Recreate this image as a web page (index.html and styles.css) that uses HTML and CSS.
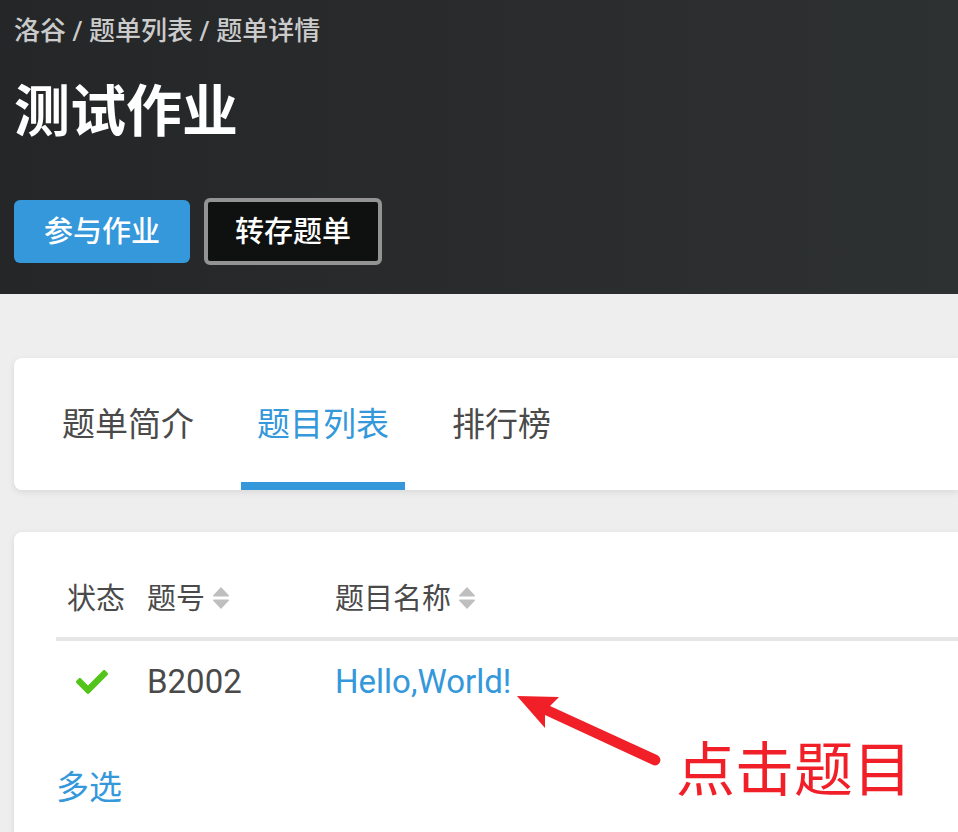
FILE: index.html
```html
<!DOCTYPE html>
<html lang="zh-CN">
<head>
<meta charset="utf-8">
<meta name="viewport" content="width=device-width, initial-scale=1">
<title>测试作业</title>
<link rel="stylesheet" href="styles.css">
</head>
<body>
<header class="hero">
  <nav class="crumbs"><a href="#">洛谷</a> / <a href="#">题单列表</a> / <a href="#">题单详情</a></nav>
  <h1 class="title">测试作业</h1>
  <div class="actions">
    <button class="btn btn-primary" type="button">参与作业</button>
    <button class="btn btn-outline" type="button">转存题单</button>
  </div>
</header>
<main class="content">
  <nav class="card tabs">
    <a class="tab" href="#">题单简介</a>
    <a class="tab tab-active" href="#">题目列表</a>
    <a class="tab" href="#">排行榜</a>
  </nav>
  <section class="card problems">
    <table class="table">
      <colgroup><col class="col-status"><col class="col-id"><col></colgroup>
      <thead>
        <tr>
          <th class="status-head">状态</th>
          <th>题号<svg class="sort" viewBox="0 0 16 22"><path d="M8 0 16 8.500q0 1-1 1H1q-1 0-1-1ZM8 22 16 13.500q0-1-1-1H1q-1 0-1 1Z"/></svg></th>
          <th>题目名称<svg class="sort" viewBox="0 0 16 22"><path d="M8 0 16 8.500q0 1-1 1H1q-1 0-1-1ZM8 22 16 13.500q0-1-1-1H1q-1 0-1 1Z"/></svg></th>
        </tr>
      </thead>
      <tbody>
        <tr>
          <td class="status-cell"><svg class="check" viewBox="0 0 512 512"><path d="M173.898 439.404l-166.400-166.400c-9.997-9.997-9.997-26.206 0-36.204l36.203-36.204c9.997-9.998 26.207-9.998 36.204 0L192 312.690 432.095 72.596c9.997-9.997 26.207-9.997 36.204 0l36.203 36.204c9.997 9.997 9.997 26.206 0 36.204l-294.400 294.401c-9.998 9.997-26.207 9.997-36.204-.001z"/></svg></td>
          <td>B2002</td>
          <td>
            <span class="target"><a class="link" href="#">Hello,World!</a>
              <span class="note">
                <svg class="arrow" viewBox="0 0 146 70"><path d="M1 0 43 1 34 10 141 59a5 5 0 0 1-4 10L29 19V32Z"/></svg>
                <span class="note-text">点击题目</span>
              </span>
            </span>
          </td>
        </tr>
      </tbody>
    </table>
    <button class="multi" type="button">多选</button>
  </section>
</main>
</body>
</html>
```

FILE: styles.css
```css
* {
  box-sizing: border-box;
}

body {
  margin: 0;
  overflow-x: hidden;
  background: #eee;
  color: #4a4a4a;
  font-family: Roboto, "Noto Sans CJK SC", sans-serif;
  font-size: 33px;
}

a {
  color: inherit;
  text-decoration: none;
}

button {
  font-family: inherit;
  cursor: pointer;
}

.hero {
  padding: 12px 14px 29px;
  background: linear-gradient(to right, #242627, #2e3132);
}

.crumbs {
  color: #cbcbcb;
  font-size: 26px;
  font-weight: 500;
  line-height: 38px;
}

.title {
  margin: 20px 0 44px;
  color: #fff;
  font-size: 56px;
  font-weight: 700;
  line-height: 84px;
}

.actions {
  display: flex;
  align-items: center;
  gap: 14px;
}

.btn {
  padding: 11px 30px 9px;
  border: 0;
  border-radius: 6px;
  color: #fff;
  font-size: 29px;
  font-weight: 500;
  line-height: 43px;
}

.btn-primary {
  background: #3498db;
}

.btn-outline {
  padding: 9px 27px 7px;
  border: 4px solid #929392;
  background: #0f1010;
}

.content {
  padding: 64px 0 0 14px;
}

.card {
  border-radius: 8px 0 0 8px;
  background: #fff;
  box-shadow: 0 2px 6px rgba(26, 26, 26, 0.1);
}

.tabs {
  display: flex;
  gap: 31px;
  margin-bottom: 42px;
  padding: 0 32px;
}

.tab {
  padding: 43px 16px 33px;
  border-bottom: 8px solid transparent;
  line-height: 48px;
}

.tab-active {
  border-bottom-color: #3498db;
  color: #3498db;
}

.problems {
  padding: 42px 0 42px 42px;
}

.table {
  width: 100%;
  border-collapse: collapse;
  table-layout: fixed;
}

.col-status {
  width: 91px;
}

.col-id {
  width: 188px;
}

.table th {
  padding: 4px 0 16px;
  border-bottom: 4px solid #e6e6e6;
  font-size: 29px;
  font-weight: 400;
  line-height: 43px;
  text-align: left;
}

.table td {
  padding: 17px 0 15px;
  line-height: 48px;
}

.table .status-head {
  padding-left: 11px;
}

.table .status-cell {
  padding-left: 20px;
}

.sort {
  width: 16px;
  height: 22px;
  margin-left: 8px;
  fill: #bfbfbf;
}

.check {
  display: block;
  width: 32px;
  height: 32px;
  fill: #52c41a;
}

.link,
.multi {
  color: #3498db;
}

.target {
  position: relative;
}

.note {
  position: absolute;
  top: 34px;
  left: 181px;
  display: flex;
  gap: 14px;
  color: #f01f28;
  white-space: nowrap;
}

.arrow {
  flex: none;
  width: 146px;
  height: 70px;
  fill: currentColor;
}

.note-text {
  padding-top: 31px;
  font-size: 59px;
  line-height: 88px;
}

.multi {
  display: block;
  margin-top: 43px;
  padding: 0;
  border: 0;
  background: none;
  font-size: 33px;
  line-height: 48px;
}
```
